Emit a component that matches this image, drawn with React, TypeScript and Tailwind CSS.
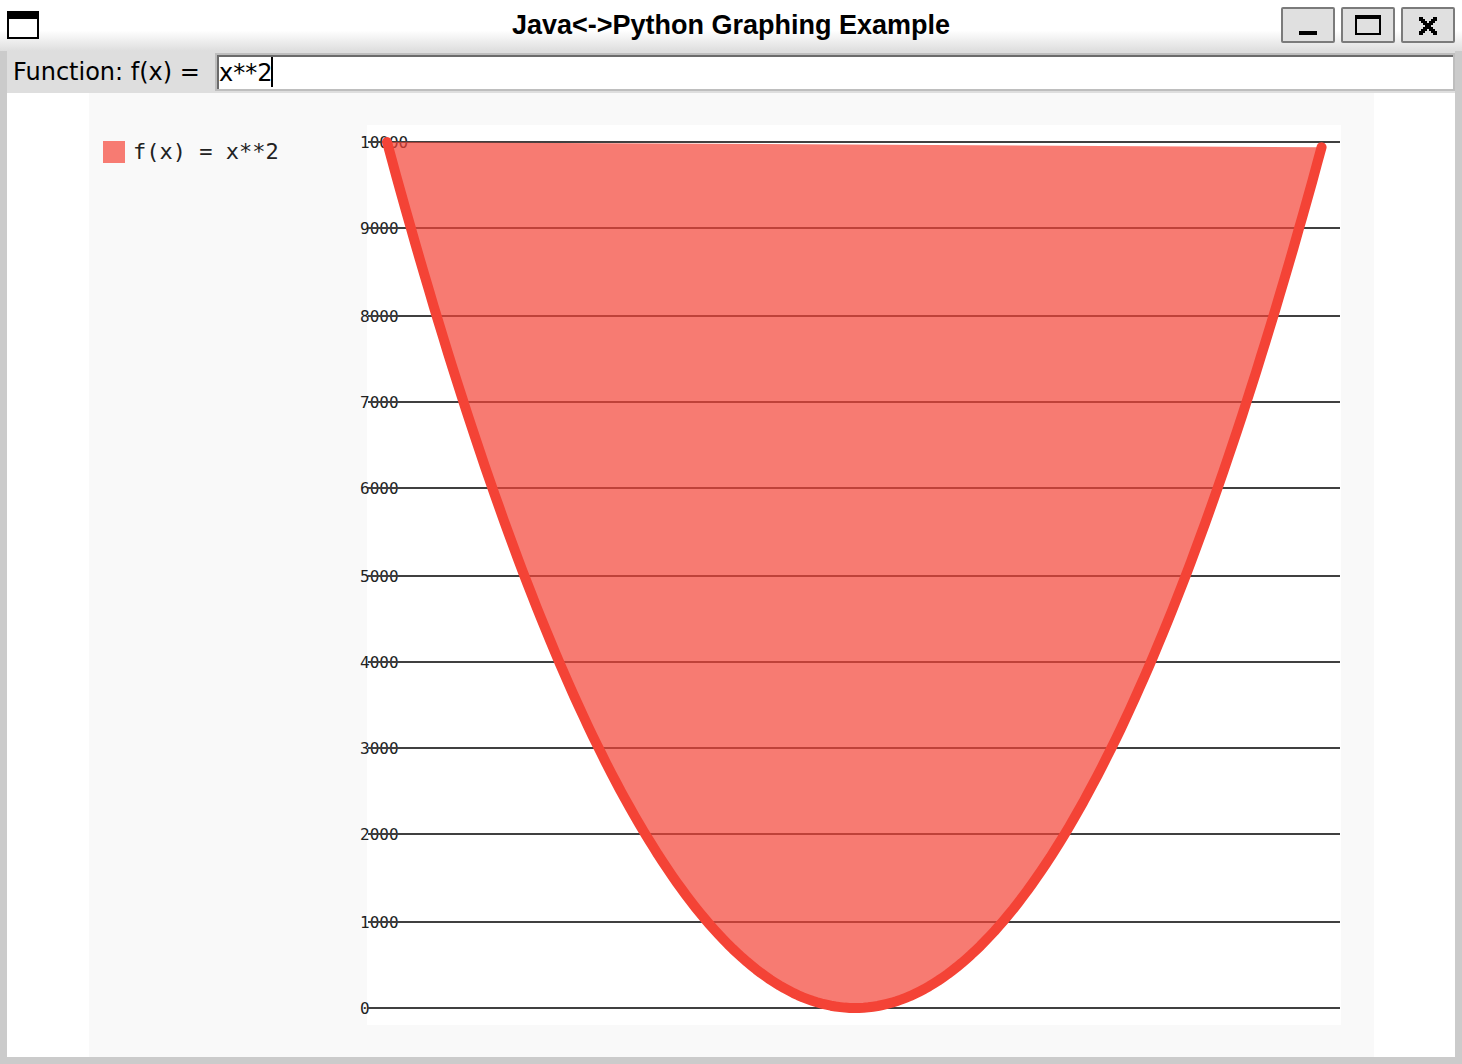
import React, { useState } from 'react';

const TICKS = [0, 1000, 2000, 3000, 4000, 5000, 6000, 7000, 8000, 9000, 10000];

const X_MIN = -100;
const X_MAX = 99.7;

const toX = (x: number) => 380 + (x - X_MIN) * 4.68;
const toY = (y: number) => 915 - y * 0.0866;

const snap = (y: number) => 2 * Math.round((y - 1) / 2) + 1;

const curve = Array.from({ length: 201 }, (_, i) => {
  const x = X_MIN + ((X_MAX - X_MIN) * i) / 200;
  return `${toX(x).toFixed(1)},${toY(x * x).toFixed(1)}`;
}).join(' ');

const WindowButton = ({ label, children }: { label: string; children: React.ReactNode }) => (
  <button
    type="button"
    aria-label={label}
    className="h-9 w-[54px] rounded-[2px] border-2 border-[#7b7b7b] bg-[#e0e0e0]"
  >
    <svg viewBox="0 0 50 32" className="h-8 w-[50px]" shapeRendering="crispEdges">
      {children}
    </svg>
  </button>
);

const TitleBar = () => (
  <header className="grid h-[51px] grid-cols-[1fr_auto_1fr] items-start bg-linear-to-b from-white from-60% to-[#dedede] px-[7px] pt-[7px]">
    <svg viewBox="0 0 32 28" className="mt-1 h-7 w-8" shapeRendering="crispEdges">
      <rect width="32" height="28" />
      <rect x="2" y="8" width="28" height="18" fill="#fff" />
    </svg>
    <h1 className="font-['Liberation_Sans',sans-serif] text-[27px] leading-9 font-bold text-black">
      Java&lt;-&gt;Python Graphing Example
    </h1>
    <div className="flex justify-end gap-[6px]">
      <WindowButton label="Minimize">
        <rect x="16" y="22" width="18" height="4" />
      </WindowButton>
      <WindowButton label="Maximize">
        <path d="M12 6h26v20H12zM14 10v14h22V10z" fillRule="evenodd" />
      </WindowButton>
      <WindowButton label="Close">
        <path
          transform="translate(16 8) scale(2)"
          d="M0 0h2v1h1v1h1v1h1v-1h1v-1h1v-1h2v2h-1v1h-1v1h-1v1h1v1h1v1h1v2h-2v-1h-1v-1h-1v-1h-1v1h-1v1h-1v1h-2v-2h1v-1h1v-1h1v-1h-1v-1h-1v-1h-1z"
        />
      </WindowButton>
    </div>
  </header>
);

const Graph = ({ fn }: { fn: string }) => (
  <svg viewBox="0 0 1448 964" className="block h-auto w-full font-['DejaVu_Sans_Mono',monospace]">
    <rect x="82" width="1285" height="964" fill="#f9f9f9" />
    <rect x="360" y="32" width="974" height="900" fill="#fff" />

    {/* Horizontal guides and their values */}
    {TICKS.map(t => {
      const y = snap(toY(t));
      return (
        <g key={t}>
          <text x="353" y={y + 6} fontSize="16" fill="#222">{t}</text>
          <line x1="361" x2="1333" y1={y} y2={y} stroke="#404040" strokeWidth="2" />
        </g>
      );
    })}

    <polygon points={curve} fill="#f44336" fillOpacity="0.7" />
    <polyline points={curve} fill="none" stroke="#f44336" strokeWidth="10" strokeLinecap="round" strokeLinejoin="round" />

    {/* Legend */}
    <rect x="96" y="48" width="22" height="22" fill="#f77b72" />
    <text x="126" y="66" fontSize="22" fill="#222" xmlSpace="preserve">{`f(x) = ${fn}`}</text>
  </svg>
);

export default function App() {
  const [fn, setFn] = useState('x**2');

  return (
    <div className="flex min-h-screen flex-col bg-white">
      <TitleBar />
      <div className="flex-1 border-x-[7px] border-b-[7px] border-[#cbcbcb]">
        <div className="flex bg-[#dedede] py-[2px] font-['DejaVu_Sans',sans-serif] text-2xl text-black">
          <label htmlFor="fn" className="w-[208px] shrink-0 pl-[6px] leading-[38px] whitespace-nowrap">
            Function: f(x) =
          </label>
          <div className="relative flex-1 border-2 border-[#bebebe]">
            <input
              id="fn"
              type="text"
              value={fn}
              onChange={e => setFn(e.target.value)}
              className="block h-[34px] w-full border-t-2 border-l-2 border-[#6b6b6b] bg-white leading-8 caret-transparent outline-none"
            />
            <span className="absolute top-[2px] left-[54px] h-[30px] w-[2px] bg-black" />
          </div>
        </div>
        <Graph fn={fn} />
      </div>
    </div>
  );
}
